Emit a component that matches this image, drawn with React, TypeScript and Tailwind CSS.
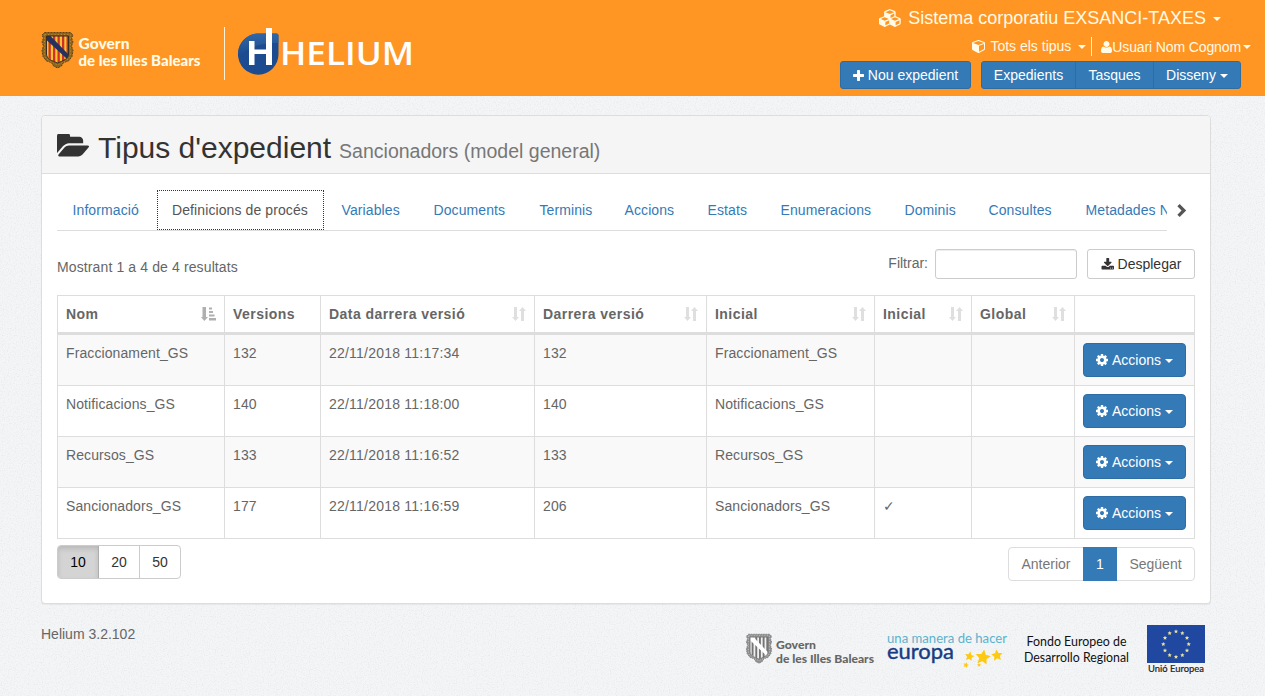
import React from "react";

const PATHS = {
  cube: "M896 1629l640-349v-636l-640 233v752zm-64-865l698-254-698-254-698 254zm832-252v768q0 35-18 65t-49 47l-704 384q-28 16-61 16t-61-16l-704-384q-31-17-49-47t-18-65v-768q0-40 23-73t61-47l704-256q22-8 44-8t44 8l704 256q38 14 61 47t23 73z",
  cubes:
    "M640 1632l384-192v-314l-384 164v342zm-64-454l404-173-404-173-404 173zm1088 454l384-192v-314l-384 164v342zm-64-454l404-173-404-173-404 173zm-448-293l384-165v-266l-384 164v267zm-64-379l441-189-441-189-441 189zm1088 518v416q0 36-19 67t-52 47l-448 224q-25 14-57 14t-57-14l-448-224q-5-2-7-4-2 2-7 4l-448 224q-25 14-57 14t-57-14l-448-224q-33-16-52-47t-19-67v-416q0-38 21.500-70t56.500-48l434-186v-400q0-38 21.500-70t56.500-48l448-192q23-10 50-10t50 10l448 192q35 16 56.500 48t21.500 70v400l434 186q36 16 57 48t21 70z",
  folder:
    "M1879 952q0 31-31 66l-336 396q-43 51-120.500 86.500t-143.500 35.500h-1088q-34 0-60.500-13t-26.500-43q0-31 31-66l336-396q43-51 120.500-86.500t143.500-35.500h1088q34 0 60.500 13t26.500 43zm-343-344v160h-832q-94 0-197 47.500t-164 119.500l-337 396-5 6q0-4-.5-12.500t-.5-12.500v-960q0-92 66-158t158-66h320q92 0 158 66t66 158v32h544q92 0 158 66t66 158z",
  download:
    "M1344 1344q0-26-19-45t-45-19-45 19-19 45 19 45 45 19 45-19 19-45zm256 0q0-26-19-45t-45-19-45 19-19 45 19 45 45 19 45-19 19-45zm128-224v320q0 40-28 68t-68 28h-1472q-40 0-68-28t-28-68v-320q0-40 28-68t68-28h465l135 136q58 56 136 56t136-56l136-136h464q40 0 68 28t28 68zm-325-569q17 41-14 70l-448 448q-18 19-45 19t-45-19l-448-448q-31-29-14-70 17-39 59-39h256v-448q0-26 19-45t45-19h256q26 0 45 19t19 45v448h256q42 0 59 39z",
  user: "M1600 1405q0 120-73 189.500t-194 69.500h-874q-121 0-194-69.500t-73-189.500q0-53 3.500-103.500t14-109 26.500-108.500 43-97.500 62-81 85.500-53.500 111.500-20q9 0 42 21.500t74.500 48 108 48 133.500 21.500 133.500-21.500 108-48 74.500-48 42-21.500q61 0 111.500 20t85.500 53.500 62 81 43 97.500 26.500 108.500 14 109 3.500 103.500zm-320-893q0 159-112.500 271.500t-271.500 112.500-271.500-112.500-112.500-271.500 112.500-271.500 271.500-112.500 271.500 112.500 112.500 271.500z",
  plus: "M1600 736v192q0 40-28 68t-68 28h-416v416q0 40-28 68t-68 28h-192q-40 0-68-28t-28-68v-416h-416q-40 0-68-28t-28-68v-192q0-40 28-68t68-28h416v-416q0-40 28-68t68-28h192q40 0 68 28t28 68v416h416q40 0 68 28t28 68z",
  cog: "M1152 896q0-106-75-181t-181-75-181 75-75 181 75 181 181 75 181-75 75-181zm512-109v222q0 12-8 23t-20 13l-185 28q-19 54-39 91 35 50 107 138 10 12 10 25t-9 23q-27 37-99 108t-94 71q-12 0-26-9l-138-108q-44 23-91 38-16 136-29 186-7 28-36 28h-222q-14 0-24.500-8.500t-11.500-21.500l-28-184q-49-16-90-37l-141 107q-10 9-25 9-14 0-25-11-126-114-165-168-7-10-7-23 0-12 8-23 15-21 51-66.500t54-70.500q-27-50-41-99l-183-27q-13-2-21-12.500t-8-23.500v-222q0-12 8-23t19-13l186-28q14-46 39-92-40-57-107-138-10-12-10-24 0-10 9-23 26-36 98.500-107.500t94.500-71.500q13 0 26 10l138 107q44-23 91-38 16-136 29-186 7-28 36-28h222q14 0 24.500 8.500t11.500 21.500l28 184q49 16 90 37l142-107q9-9 24-9 13 0 25 10 129 119 165 170 7 8 7 22 0 12-8 23-15 21-51 66.500t-54 70.500q26 50 41 98l183 28q13 2 21 12.500t8 23.500z",
};

function Icon({ name, box, className }: { name: keyof typeof PATHS; box: string; className: string }) {
  return (
    <svg viewBox={box} className={`shrink-0 ${className}`} fill="currentColor" aria-hidden="true">
      <path d={PATHS[name]} />
    </svg>
  );
}

function Caret({ className = "" }: { className?: string }) {
  return (
    <span
      className={`inline-block h-0 w-0 border-x-4 border-t-4 border-x-transparent border-t-current ${className}`}
    />
  );
}

function SortBoth() {
  return (
    <svg viewBox="0 0 14 14" className="h-3.5 w-3.5 text-[#dfdfdf]" fill="currentColor" aria-hidden="true">
      <path d="M2 0h3v10h2L3.500 14 0 10h2zM9 14h3V4h2L10.500 0 7 4h2z" />
    </svg>
  );
}

function SortAsc() {
  return (
    <svg viewBox="0 0 15 14" className="h-3.5 w-[15px] text-[#b0b0b0]" fill="currentColor" aria-hidden="true">
      <path d="M1.500 0h3.500v10h2L3.300 14 0 10h1.500zM8 .5h3v2H8zM8 4h4v2H8zM8 7.500h5.500v2H8zM8 11h7v2.500H8z" />
    </svg>
  );
}

function Shield({ mono = false }: { mono?: boolean }) {
  const rim = mono ? "#8f8f8f" : "#8a6420";
  const rimEdge = mono ? "#7d7d7d" : "#5e431a";
  const fleck = mono ? "#d0d0d0" : "#b98a2c";
  const field = mono ? "#f0f0f0" : "#fbc52d";
  const bar = mono ? "#747474" : "#cf302a";
  const band = mono ? "#ffffff" : "#25315f";
  const edge = mono ? "#747474" : "#3a2c20";
  return (
    <svg viewBox="0 0 32 38" className="h-full w-full" aria-hidden="true">
      <path
        d="M3 1.500h26L31.500 4 30 7l1.500 4L30 15l1.500 4.500-1 6L27 30l-5 1.500L20 35l-4 2-4-2-2-3.500L5 30l-3.500-4.500-1-6L2 15 .5 11 2 7 .5 4z"
        fill={rim}
        stroke={rimEdge}
        strokeWidth="1"
        strokeDasharray="2 1"
      />
      <path
        d="M3 3.500v19c0 4 2.500 6.500 8 9l5 2.500 5-2.500c5.500-2.500 8-5 8-9v-19H3"
        fill="none"
        stroke={fleck}
        strokeWidth="1"
        strokeDasharray="1.200 2"
      />
      <path d="M5 5h22v18c0 5-5 6.500-11 9-6-2.500-11-4-11-9z" fill={field} />
      <path d="M7 5h2.300v23.500L7 27zM11.500 5h2.300v26l-2.300-1zM16 5h2.300v26L16 32zM20.500 5h2.300v24.500l-2.300 1zM25 5h2v18l-2 5z" fill={bar} />
      <path d="M5 5h4l18 18.500c0 1.500-.8 3-2 4L5 9z" fill={band} />
      <path d="M5 5h22v18c0 5-5 6.500-11 9-6-2.500-11-4-11-9z" fill="none" stroke={edge} />
    </svg>
  );
}

function GovernLogo() {
  return (
    <svg viewBox="0 0 160 38" className="h-[38px] w-40" aria-label="Govern de les Illes Balears">
      <svg x="0" y="0" width="33" height="38">
        <Shield />
      </svg>
      <g fill="#fffbe6" fontFamily="Lato, sans-serif" fontWeight="900" fontSize="14.500">
        <text x="37.500" y="18" textLength="51" lengthAdjust="spacingAndGlyphs">Govern</text>
        <text x="37.500" y="35" textLength="122" lengthAdjust="spacingAndGlyphs">de les Illes Balears</text>
      </g>
    </svg>
  );
}

function HeliumLogo() {
  return (
    <svg viewBox="0 0 176 48" className="h-12 w-44" aria-label="Helium">
      <defs>
        <linearGradient id="drop" x1="0" y1="0" x2="0" y2="1">
          <stop offset="0" stopColor="#396fae" />
          <stop offset="1" stopColor="#174a8d" />
        </linearGradient>
      </defs>
      <path d="M20 5.500h19.500q2 0 2 2V26A20.500 20.500 0 0 1 21.500 46.700 20.500 20.500 0 0 1 1 26 20.500 20.500 0 0 1 20 5.500z" fill="#1c4c8f" />
      <path d="M20 5.500h19.500q2 0 2 2V15Q16 14 1.200 29A20.500 20.500 0 0 1 20 5.500z" fill="url(#drop)" opacity=".75" />
      <path d="M12 13h5.500v8.500H29V0h6v37h-6V26H17.500v11H12z" fill="#fff" />
      <text
        x="43"
        y="36.500"
        fill="#fff"
        fontFamily="'Open Sans', sans-serif"
        fontWeight="600"
        fontSize="32"
        textLength="134"
        lengthAdjust="spacingAndGlyphs"
      >
        HELIUM
      </text>
    </svg>
  );
}

const star = (cx: number, cy: number, r: number, turn = 0) =>
  Array.from({ length: 10 }, (_, i) => {
    const a = (Math.PI / 5) * i - Math.PI / 2 + turn;
    const d = i % 2 ? r * 0.48 : r;
    return `${(cx + d * Math.cos(a)).toFixed(2)},${(cy + d * Math.sin(a)).toFixed(2)}`;
  }).join(" ");

function FooterLogos() {
  return (
    <div className="flex items-start pr-1.5">
      <svg viewBox="0 0 130 34" className="mt-2 h-[34px] w-[130px]" aria-label="Govern de les Illes Balears">
        <svg x="0" y="1" width="28" height="31">
          <Shield mono />
        </svg>
        <g fill="#666" fontFamily="Lato, sans-serif" fontWeight="900" fontSize="12">
          <text x="31" y="17" textLength="40" lengthAdjust="spacingAndGlyphs">Govern</text>
          <text x="31" y="30.500" textLength="98" lengthAdjust="spacingAndGlyphs">de les Illes Balears</text>
        </g>
      </svg>
      <svg viewBox="0 0 122 38" className="ml-3 mt-1.5 h-[38px] w-[122px] overflow-visible" aria-label="una manera de hacer europa">
        <text x="0" y="13" fill="#5cb3cc" fontFamily="Lato, sans-serif" fontSize="12.500" textLength="120" lengthAdjust="spacingAndGlyphs">
          una manera de hacer
        </text>
        <text x="0" y="29" fill="#163d83" stroke="#163d83" strokeWidth=".4" fontFamily="Lato, sans-serif" fontSize="21" textLength="67" lengthAdjust="spacingAndGlyphs">
          europa
        </text>
        <g fill="#fdc913">
          <polygon points={star(82.500, 26.500, 5, 0.2)} />
          <polygon points={star(96, 27.500, 8, 0.15)} />
          <polygon points={star(110, 25.500, 6, -0.1)} />
          <polygon points={star(79, 35, 3, 0.3)} />
          <polygon points={star(92, 35, 2.200)} />
        </g>
      </svg>
      <svg viewBox="0 0 108 36" className="ml-3.5 mt-[9px] h-9 w-[108px] overflow-visible" aria-label="Fondo Europeo de Desarrollo Regional">
        <g fill="#111" fontFamily="Lato, sans-serif" fontSize="12.500">
          <text x="3.500" y="12.500" textLength="100" lengthAdjust="spacingAndGlyphs">Fondo Europeo de</text>
          <text x="1" y="28.500" textLength="105" lengthAdjust="spacingAndGlyphs">Desarrollo Regional</text>
        </g>
      </svg>
      <svg viewBox="0 0 58 51" className="ml-4 mt-px h-[51px] w-[58px]" aria-label="Unió Europea">
        <rect width="58" height="38" fill="#2148a0" />
        <g fill="#e8e29a">
          {Array.from({ length: 12 }, (_, i) => {
            const a = (Math.PI / 6) * i;
            return <polygon key={i} points={star(29 + 12.700 * Math.sin(a), 19.200 - 12.700 * Math.cos(a), 2.200)} />;
          })}
        </g>
        <text x="1" y="47" fill="#222" stroke="#222" strokeWidth=".2" fontFamily="Lato, sans-serif" fontSize="9" textLength="56" lengthAdjust="spacingAndGlyphs">
          Unió Europea
        </text>
      </svg>
    </div>
  );
}

function Header() {
  return (
    <header className="flex h-24 justify-between bg-[#ff9523] pl-[41px] pr-3.5 text-[#fffbe6]">
      <div className="flex items-start">
        <div className="mt-[31px]">
          <GovernLogo />
        </div>
        <div className="ml-[23px] mt-[27px] h-[53px] w-px bg-[#fff3d8]" />
        <div className="ml-3 mt-7">
          <HeliumLogo />
        </div>
      </div>
      <div className="flex flex-col items-end">
        <div className="mr-[30px] mt-[5px] flex h-[26px] items-center text-[18px]">
          <Icon name="cubes" box="0 0 2304 1792" className="mr-1.5 h-[18px] w-[23px]" />
          <span>Sistema corporatiu EXSANCI-TAXES</span>
          <Caret className="ml-[7px] mt-0.5" />
        </div>
        <div className="mt-[5px] flex h-5 items-center">
          <Icon name="cube" box="0 0 1664 1792" className="mr-[5px] h-3.5 w-[13px]" />
          <span>Tots els tipus</span>
          <Caret className="ml-[7px] mt-0.5" />
          <span className="ml-[5px] h-[19px] w-px bg-[#fff3d8]" />
          <Icon name="user" box="192 128 1408 1536" className="ml-[9px] mt-0.5 h-3 w-[11px]" />
          <span className="mt-0.5 tracking-[-0.12px]">Usuari Nom Cognom</span>
          <Caret className="ml-[2px] mt-0.5" />
        </div>
        <div className="mr-2.5 mt-[5px] flex h-7 gap-2.5 text-white">
          <button className="flex w-[131px] items-center justify-center rounded-[3px] border border-[#2e6da4] bg-[#337ab7]">
            <Icon name="plus" box="192 128 1408 1408" className="mr-1 h-[11px] w-[11px]" />
            Nou expedient
          </button>
          <div className="flex w-[260px] overflow-hidden rounded-[3px] border border-[#2e6da4] bg-[#337ab7]">
            <button className="w-[94px] border-r border-[#2e6da4]">Expedients</button>
            <button className="w-[78px] border-r border-[#2e6da4]">Tasques</button>
            <button className="flex flex-1 items-center justify-center">
              Disseny
              <Caret className="ml-1 mt-0.5" />
            </button>
          </div>
        </div>
      </div>
    </header>
  );
}

const TABS = [
  { label: "Informació", width: "w-[99px]" },
  { label: "Definicions de procés", width: "w-[170px]", active: true },
  { label: "Variables", width: "w-[92px]" },
  { label: "Documents", width: "w-[106px]" },
  { label: "Terminis", width: "w-[85px]" },
  { label: "Accions", width: "w-[83px]" },
  { label: "Estats", width: "w-[73px]" },
  { label: "Enumeracions", width: "w-[124px]" },
  { label: "Dominis", width: "w-[84px]" },
  { label: "Consultes", width: "w-[97px]" },
  { label: "Metadades NTI", width: "w-[130px]" },
];

function Tabs() {
  return (
    <nav className="mt-[15px] flex h-[42px]">
      <div className="flex h-[42px] w-[1110px] overflow-hidden border-b border-[#ddd] text-[#337ab7]">
        {TABS.map((tab) => (
          <div key={tab.label} className={`${tab.width} h-[41px] shrink-0 whitespace-nowrap tracking-[0.1px]`}>
            {tab.active ? (
              <div className="ml-px mt-px h-10 w-[167px] border border-dotted border-[#333] pl-3.5 pt-[9px] leading-5 text-[#555]">
                {tab.label}
              </div>
            ) : (
              <div className="pl-[15.500px] pt-[11px] leading-5">{tab.label}</div>
            )}
          </div>
        ))}
      </div>
      <svg viewBox="0 0 10 14" className="ml-2.5 mt-[15px] h-[13px] w-2.5 text-[#555]" fill="currentColor" aria-label="Més pestanyes">
        <path d="M0 2.500L2.500 0 9.500 7l-7 7L0 11.500 4.500 7z" />
      </svg>
    </nav>
  );
}

const COLUMNS = [
  { label: "Nom", width: "w-[167px]", sort: "asc" },
  { label: "Versions", width: "w-24", sort: "" },
  { label: "Data darrera versió", width: "w-[214px]", sort: "both" },
  { label: "Darrera versió", width: "w-[172px]", sort: "both" },
  { label: "Inicial", width: "w-[168px]", sort: "both" },
  { label: "Inicial", width: "w-[97px]", sort: "both" },
  { label: "Global", width: "w-[103px]", sort: "both" },
  { label: "", width: "w-[120px]", sort: "" },
];

const ROWS = [
  ["Fraccionament_GS", "132", "22/11/2018 11:17:34", "132", "Fraccionament_GS", "", ""],
  ["Notificacions_GS", "140", "22/11/2018 11:18:00", "140", "Notificacions_GS", "", ""],
  ["Recursos_GS", "133", "22/11/2018 11:16:52", "133", "Recursos_GS", "", ""],
  ["Sancionadors_GS", "177", "22/11/2018 11:16:59", "206", "Sancionadors_GS", "✓", ""],
];

function DataTable() {
  return (
    <table className="w-[1138px] table-fixed border-separate border-spacing-0 border-b border-r border-[#ddd]">
      <thead>
        <tr>
          {COLUMNS.map((col, i) => (
            <th
              key={i}
              className={`${col.width} h-[39px] border-b-2 border-l border-t border-[#ddd] py-0 pl-2 pr-2 text-left font-bold`}
            >
              <div className="flex items-center justify-between">
                <span className="whitespace-nowrap tracking-[0.45px]">{col.label}</span>
                {col.sort === "asc" && <SortAsc />}
                {col.sort === "both" && <SortBoth />}
              </div>
            </th>
          ))}
        </tr>
      </thead>
      <tbody>
        {ROWS.map((row) => (
          <tr key={row[0]} className="odd:bg-[#f9f9f9]">
            {row.map((cell, i) => (
              <td
                key={i}
                className={`h-[51px] border-l border-t border-[#ddd] px-2 pb-0 pt-2 align-top ${
                  i === 2 ? "tracking-[0.22px]" : "tracking-[0.1px]"
                }`}
              >
                {cell}
              </td>
            ))}
            <td className="h-[51px] border-l border-t border-[#ddd] px-2 pb-0 pt-2 align-top">
              <button className="flex h-[34px] w-[103px] items-center justify-center rounded border border-[#2e6da4] bg-[#337ab7] text-white">
                <Icon name="cog" box="128 128 1536 1536" className="mr-1 h-3 w-3" />
                Accions
                <Caret className="ml-1 mt-0.5" />
              </button>
            </td>
          </tr>
        ))}
      </tbody>
    </table>
  );
}

export default function App() {
  return (
    <div className="relative isolate h-[696px] w-[1265px] overflow-hidden bg-[#f2f4f6] font-['Liberation_Sans',Arial,sans-serif] text-sm leading-5 text-[#666]">
      <svg className="absolute inset-0 -z-10 h-full w-full opacity-[.16]" aria-hidden="true">
        <filter id="paper">
          <feTurbulence type="fractalNoise" baseFrequency="0.85" numOctaves="2" seed="4" />
          <feColorMatrix values="1 0 0 0 0  1 0 0 0 0  1 0 0 0 0  0 0 0 0 1" />
          <feComponentTransfer>
            <feFuncR type="linear" slope="1.300" intercept=".25" />
            <feFuncG type="linear" slope="1.300" intercept=".26" />
            <feFuncB type="linear" slope="1.300" intercept=".28" />
          </feComponentTransfer>
        </filter>
        <rect width="100%" height="100%" filter="url(#paper)" />
      </svg>
      <Header />
      <main className="ml-[41px] mt-[19px] h-[489px] w-[1170px] rounded border border-[#ddd] bg-white shadow-[0_1px_1px_rgba(0,0,0,.05)]">
        <div className="flex h-[58px] items-start rounded-t-[3px] border-b border-[#ddd] bg-[#f5f5f5] pl-[15px]">
          <Icon name="folder" box="0 256 1879 1280" className="mt-[18px] h-[23px] w-8 text-[#333]" />
          <h1 className="ml-[9px] mt-[15px] flex items-baseline text-[30px] leading-[33px] text-[#333]">
            Tipus d'expedient
            <span className="ml-2 text-[19.500px] leading-5 text-[#777]">Sancionadors (model general)</span>
          </h1>
        </div>
        <div className="px-[15px]">
          <Tabs />
          <div className="mt-[18px] flex h-[46px] items-start justify-between">
            <span className="mt-2 tracking-[0.12px]">Mostrant 1 a 4 de 4 resultats</span>
            <div className="flex">
              <label className="mt-1">Filtrar:</label>
              <input className="ml-[7px] h-[30px] w-[142px] rounded-[3px] border border-[#ccc] bg-white shadow-[inset_0_1px_1px_rgba(0,0,0,.075)]" />
              <button className="ml-2.5 flex h-[30px] w-[108px] items-center justify-center rounded-[3px] border border-[#ccc] bg-white text-[#333]">
                <Icon name="download" box="0 0 1728 1536" className="mr-1 h-[11.500px] w-[13px]" />
                Desplegar
              </button>
            </div>
          </div>
          <DataTable />
          <div className="flex items-start justify-between pt-1.5">
            <div className="flex h-[34px] w-[124px] overflow-hidden rounded border border-[#ccc] text-[#333]">
              <button className="w-10 bg-[#d4d4d4] text-black shadow-[inset_0_3px_5px_rgba(0,0,0,.125)]">10</button>
              <button className="w-[41px] border-l border-[#adadad]">20</button>
              <button className="flex-1 border-l border-[#ccc]">50</button>
            </div>
            <div className="mt-0.5 flex h-[34px] w-[187px] rounded border border-[#ddd] text-[#777]">
              <button className="w-[74px]">Anterior</button>
              <button className="-my-px w-[34px] bg-[#337ab7] text-white">1</button>
              <button className="flex-1">Següent</button>
            </div>
          </div>
        </div>
      </main>
      <footer className="ml-[41px] mt-5 flex w-[1170px] items-start justify-between">
        <span>Helium 3.2.102</span>
        <FooterLogos />
      </footer>
    </div>
  );
}
